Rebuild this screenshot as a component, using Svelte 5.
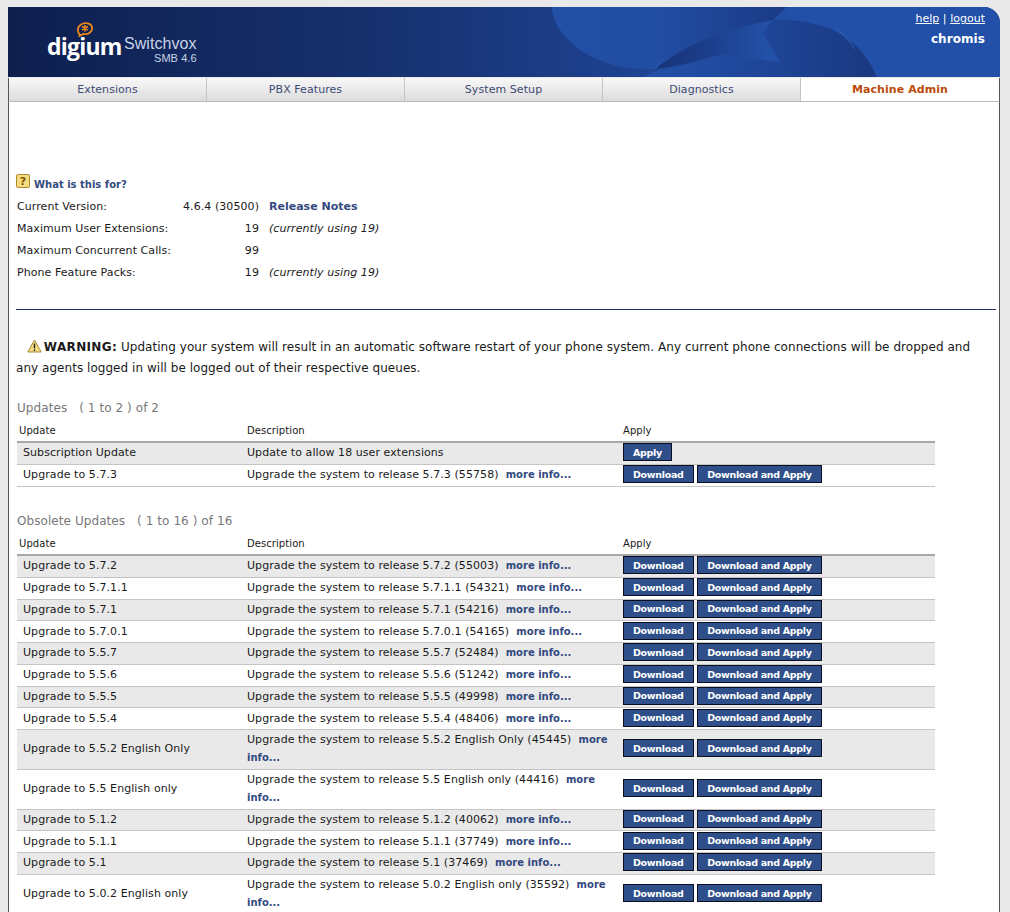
<script>
    const more = 'more info...';

    const updates = [
        { name: 'Subscription Update', desc: 'Update to allow 18 user extensions', apply: true },
        { name: 'Upgrade to 5.7.3', desc: 'Upgrade the system to release 5.7.3 (55758)' }
    ];

    const rel = (v, id) => ({ name: 'Upgrade to ' + v, desc: `Upgrade the system to release ${v} (${id})` });

    const obsolete = [
        rel('5.7.2', 55003),
        rel('5.7.1.1', 54321),
        rel('5.7.1', 54216),
        rel('5.7.0.1', 54165),
        rel('5.5.7', 52484),
        rel('5.5.6', 51242),
        rel('5.5.5', 49998),
        rel('5.5.4', 48406),
        { ...rel('5.5.2 English Only', 45445), tall: true },
        { ...rel('5.5 English only', 44416), tall: true },
        rel('5.1.2', 40062),
        rel('5.1.1', 37749),
        rel('5.1', 37469),
        { ...rel('5.0.2 English only', 35592), tall: true }
    ];

    const tabs = ['Extensions', 'PBX Features', 'System Setup', 'Diagnostics', 'Machine Admin'];

    const info = [
        { label: 'Current Version:', value: '4.6.4 (30500)', link: 'Release Notes' },
        { label: 'Maximum User Extensions:', value: '19', note: '(currently using 19)' },
        { label: 'Maximum Concurrent Calls:', value: '99' },
        { label: 'Phone Feature Packs:', value: '19', note: '(currently using 19)' }
    ];

    const sections = [
        { title: 'Updates', range: '( 1 to 2 ) of 2', rows: updates },
        { title: 'Obsolete Updates', range: '( 1 to 16 ) of 16', rows: obsolete }
    ];
</script>

<div class="page">
    <header class="banner">
        <svg class="swoosh" width="992" height="70" viewBox="0 0 992 70" aria-hidden="true">
            <defs>
                <linearGradient id="bg" x1="0" x2="1" y1="0" y2="0">
                    <stop offset="0" stop-color="#0e1f4e" />
                    <stop offset="0.35" stop-color="#16306c" />
                    <stop offset="0.55" stop-color="#1c3c86" />
                    <stop offset="0.8" stop-color="#2250a8" />
                </linearGradient>
                <linearGradient id="lobe" gradientUnits="userSpaceOnUse" x1="35" x2="740" y1="0" y2="0">
                    <stop offset="0" stop-color="#2250a6" />
                    <stop offset="0.45" stop-color="#214da2" />
                    <stop offset="1" stop-color="#1a3a85" />
                </linearGradient>
                <linearGradient id="wedge" gradientUnits="userSpaceOnUse" x1="345" x2="680" y1="0" y2="0">
                    <stop offset="0" stop-color="#183478" />
                    <stop offset="0.4" stop-color="#1b3c88" />
                    <stop offset="1" stop-color="#2250a6" />
                </linearGradient>
                <linearGradient id="arc" gradientUnits="userSpaceOnUse" x1="330" x2="1010" y1="0" y2="0">
                    <stop offset="0" stop-color="#2250a6" />
                    <stop offset="0.4" stop-color="#1f489c" />
                    <stop offset="1" stop-color="#1a3880" />
                </linearGradient>
            </defs>
            <rect width="992" height="70" fill="url(#bg)" />
            <!-- traced in 3x crop coordinates -->
            <g transform="translate(532 -2) scale(0.3333)">
                <path d="M35 6C45 110 170 192 320 192C480 192 640 110 740 6Z" fill="url(#lobe)" />
                <path d="M345 192C450 110 560 70 700 45L667 82L722 173L550 148C480 165 420 185 345 192Z" fill="url(#wedge)" />
                <path d="M700 45C850 40 960 90 1010 216L310 216L370 190C420 185 480 165 550 148L722 173L667 82Z" fill="url(#arc)" />
                <path d="M870 60C910 75 935 110 950 140C930 110 905 85 870 60Z" fill="#2a58b0" />
                <path d="M380 150L335 192L350 192Z" fill="#2450a6" />
            </g>
        </svg>
        <div class="logo">
            <svg class="bubble" width="18" height="15" viewBox="0 0 18 15" aria-hidden="true">
                <path d="M4 13C1 10 1 5 5 2.500C9 0 15 1 16 5C17 10 12 13 7 12L3 14.500Z" fill="none" stroke="#e8861c" stroke-width="1.800" />
                <path d="M9 3V9.500M6 4.500L12 8M12 4.500L6 8" stroke="#e8861c" stroke-width="1.600" />
            </svg>
            <span class="digium">digium</span>
            <div class="product">
                <span class="switchvox">Switchvox</span>
                <span class="smb">SMB 4.6</span>
            </div>
        </div>
        <div class="account">
            <div class="links"><a href="#help">help</a> | <a href="#logout">logout</a></div>
            <div class="user">chromis</div>
        </div>
    </header>

    <nav class="tabs">
        {#each tabs as tab, i}
            <div class="tab" class:active={i === 4}>{tab}</div>
        {/each}
    </nav>

    <main class="content">
        <div class="what">
            <svg width="14" height="14" viewBox="0 0 14 14" aria-hidden="true">
                <rect x="0.500" y="0.500" width="13" height="13" rx="1.500" fill="#f6dc80" stroke="#b08a2a" />
                <text x="7" y="11" class="q">?</text>
            </svg>
            <a href="#what">What is this for?</a>
        </div>

        <div class="info">
            {#each info as row}
                <div class="label">{row.label}</div>
                <div class="value">{row.value}</div>
                <div>
                    {#if row.link}<a href="#notes" class="notes">{row.link}</a>{/if}
                    {#if row.note}<em>{row.note}</em>{/if}
                </div>
            {/each}
        </div>

        <hr />

        <p class="warning">
            <svg width="15" height="14" viewBox="0 0 15 14" aria-hidden="true">
                <path d="M7.500 1L14.200 13H0.800Z" fill="#f6dc85" stroke="#a8893a" stroke-linejoin="round" />
                <path d="M7.500 4.500V9.500M7.500 10.500V12" stroke="#222" stroke-width="1.400" />
            </svg>
            <b>WARNING:</b> Updating your system will result in an automatic software restart of your phone system. Any current phone connections will be dropped and any agents logged in will be logged out of their respective queues.
        </p>

        {#each sections as section}
            <h3>{section.title}<span class="range">{section.range}</span></h3>
            <table>
                <thead>
                    <tr>
                        <th class="c1">Update</th>
                        <th class="c2">Description</th>
                        <th class="c3">Apply</th>
                    </tr>
                </thead>
                <tbody>
                    {#each section.rows as row}
                        <tr class:tall={row.tall}>
                            <td class="c1">{row.name}</td>
                            <td class="c2">
                                {row.desc}{#if !row.apply}&nbsp; <a href="#more">{more}</a>{/if}
                            </td>
                            <td class="c3">
                                {#if row.apply}
                                    <button>Apply</button>
                                {:else}
                                    <button>Download</button>
                                    <button>Download and Apply</button>
                                {/if}
                            </td>
                        </tr>
                    {/each}
                </tbody>
            </table>
        {/each}
    </main>
</div>

<style>
    :global(body) {
        margin: 0;
        background: #e9e9e9;
        overflow: hidden;
    }

    .page {
        margin: 7px 10px 0 8px;
        height: 905px;
        overflow: hidden;
        font-family: "DejaVu Sans", Verdana, sans-serif;
        font-size: 11px;
        letter-spacing: 0.07px;
        color: #1a1a1a;
    }

    .banner {
        position: relative;
        height: 70px;
        border-top-right-radius: 16px;
        overflow: hidden;
        background: #1a3a80;
    }

    .swoosh {
        position: absolute;
        left: 0;
        top: 0;
    }

    .logo {
        position: absolute;
        left: 39px;
        top: 11px;
        width: 150px;
        height: 50px;
        color: #fff;
    }

    .bubble {
        position: absolute;
        left: 29px;
        top: 4px;
    }

    .digium {
        position: absolute;
        left: 0;
        top: 15px;
        font-family: "Open Sans", sans-serif;
        font-size: 23px;
        font-weight: 700;
        letter-spacing: -0.8px;
        line-height: 26px;
    }

    .product {
        position: absolute;
        left: 77px;
        top: 17px;
        display: flex;
        flex-direction: column;
        align-items: flex-end;
        color: #c9d4e8;
    }

    .switchvox {
        font-family: "Liberation Sans", sans-serif;
        font-size: 16px;
        line-height: 17px;
    }

    .smb {
        font-family: "Liberation Sans", sans-serif;
        font-size: 11px;
        line-height: 13px;
    }

    .account {
        position: absolute;
        right: 15px;
        top: 4px;
        text-align: right;
        color: #fff;
    }

    .links {
        line-height: 16px;
    }

    .links a {
        color: #fff;
        font-weight: 400;
        text-decoration: underline;
    }

    .user {
        margin-top: 4px;
        font-size: 12px;
        font-weight: 700;
        line-height: 16px;
    }

    .tabs {
        display: flex;
        height: 23px;
        margin-top: 1px;
        background: #fff;
        border-left: 1px solid #555;
        border-right: 1px solid #555;
        border-bottom: 1px solid #bbb;
    }

    .tab {
        flex: 0 0 198px;
        box-sizing: border-box;
        border-right: 1px solid #c4c4c4;
        background: linear-gradient(#f8f8f8, #dcdcdc);
        color: #3c4a74;
        text-align: center;
        line-height: 23px;
    }

    .tab.active {
        border-right: none;
        background: #fff;
        color: #bb4a08;
        font-weight: 700;
    }

    .content {
        height: 803px;
        padding: 72px 3px 0 7px;
        background: #fff;
        border-left: 1px solid #555;
        border-right: 1px solid #555;
    }

    .what {
        display: flex;
        align-items: flex-start;
        gap: 4px;
        height: 18px;
    }

    .what a {
        padding-top: 4px;
        font-size: 10px;
        line-height: 14px;
    }

    .q {
        fill: #7a5200;
        font-size: 11px;
        font-weight: 700;
        text-anchor: middle;
    }

    a {
        color: #344a80;
        font-weight: 700;
        letter-spacing: 0;
        text-decoration: none;
    }

    .info {
        display: grid;
        grid-template-columns: 163px 79px 1fr;
        grid-auto-rows: 22px;
        align-items: center;
        margin: 3px 0 0 1px;
    }

    .value {
        text-align: right;
    }

    .info > div:nth-child(3n) {
        padding-left: 10px;
    }

    hr {
        margin: 26px 0 0;
        border: none;
        border-top: 1px solid #1f2f66;
    }

    .warning {
        margin: 27px 0 0;
        padding-right: 12px;
        font-size: 12px;
        letter-spacing: 0.04px;
        line-height: 20.5px;
        text-indent: 11px;
    }

    .warning b {
        letter-spacing: 0.35px;
    }

    .warning svg {
        margin: -3px -2px 0 0;
        vertical-align: -2px;
    }

    h3 {
        margin: 22px 0 0 1px;
        color: #77777a;
        font-size: 12px;
        font-weight: 400;
        line-height: 16px;
    }

    .range {
        margin-left: 12px;
    }

    table {
        width: 918px;
        margin: 3px 0 26.5px 1px;
        border-collapse: collapse;
        table-layout: fixed;
    }

    th {
        height: 22px;
        border-bottom: 2px solid #a8a8a8;
        font-size: 10px;
        font-weight: 400;
        text-align: left;
        padding: 0 2px;
    }

    td {
        height: 20.75px;
        padding: 0 6px;
        border-bottom: 1px solid #c4c4c4;
        line-height: 18px;
    }

    .c1 { width: 214px; }
    .c2 { width: 362px; }

    td.c2, th.c2 { padding-left: 12px; padding-right: 2px; }
    td.c3, th.c3 { padding-left: 12px; }

    td.c2 a {
        font-size: 10px;
    }

    tbody tr:nth-child(odd) {
        background: #e9e9e9;
    }

    tr.tall td {
        height: 38.75px;
    }

    button {
        height: 18px;
        margin-top: -1px;
        padding: 0 9px;
        border: 1px solid #0a0f20;
        border-radius: 0;
        background: #2f4f8a;
        color: #fff;
        font-family: inherit;
        font-size: 9.5px;
        font-weight: 700;
        letter-spacing: -0.3px;
        vertical-align: top;
    }
</style>
